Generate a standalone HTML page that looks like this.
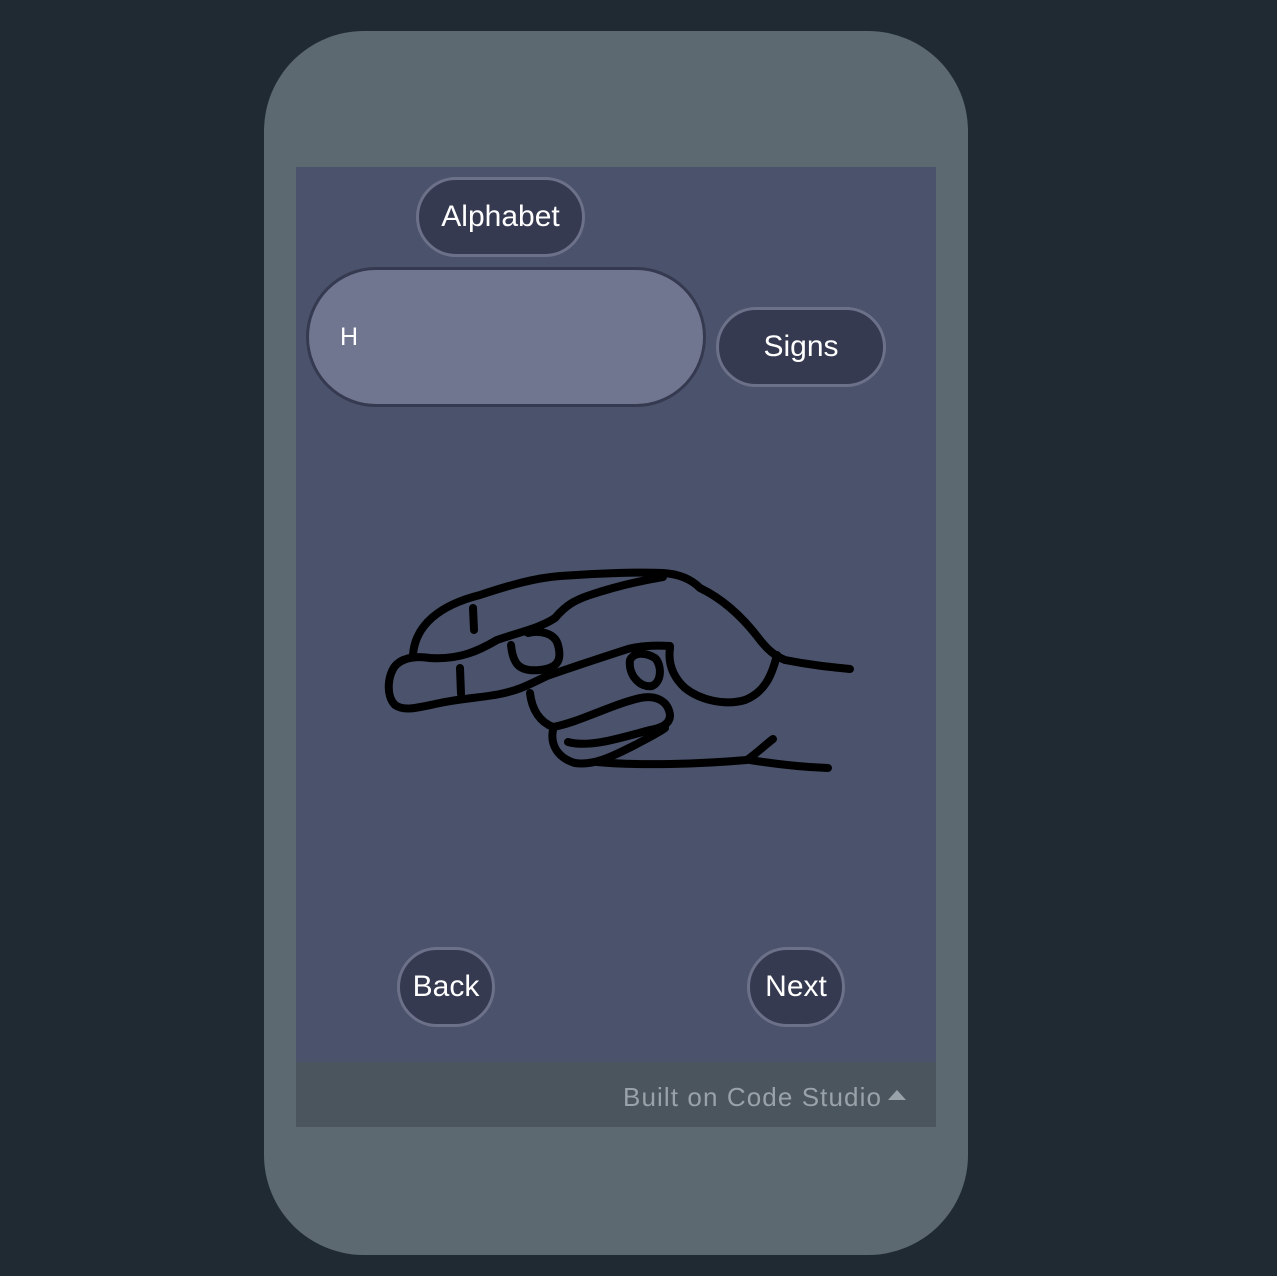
<!DOCTYPE html>
<html><head><meta charset="utf-8">
<style>
html,body{margin:0;padding:0;width:1277px;height:1276px;background:#202a33;overflow:hidden;font-family:"Liberation Sans",sans-serif;}
.phone{position:absolute;left:264px;top:31px;width:704px;height:1224px;background:#5c6970;border-radius:100px;}
.screen{position:absolute;left:296px;top:167px;width:640px;height:960px;background:#4a536b;}
.footer{position:absolute;left:296px;top:1062px;width:640px;height:65px;background:#4b555e;}
.ft{position:absolute;left:623px;top:1082px;font-size:26px;color:#9aa2a9;white-space:nowrap;letter-spacing:1.1px}
.btn{position:absolute;box-sizing:border-box;background:#363a51;border:3px solid #6c7189;border-radius:40px;color:#fff;font-size:30px;display:flex;align-items:center;justify-content:center;}
.box{position:absolute;left:306px;top:267px;width:400px;height:140px;box-sizing:border-box;background:#717690;border:3px solid #363a51;border-radius:70px;color:#fff;font-size:25px;}
</style></head><body>
<div class="phone"></div>
<div class="screen"></div>
<div class="footer"></div>
<div class="btn" style="left:416px;top:177px;width:169px;height:80px;">Alphabet</div>
<div class="box"><span style="position:absolute;left:31px;top:53px;">H</span></div>
<div class="btn" style="left:716px;top:307px;width:170px;height:80px;">Signs</div>
<div class="btn" style="left:397px;top:947px;width:98px;height:80px;">Back</div>
<div class="btn" style="left:747px;top:947px;width:98px;height:80px;">Next</div>
<svg style="position:absolute;left:0;top:0" width="1277" height="1276" fill="none" stroke="#000" stroke-width="8" stroke-linecap="round" stroke-linejoin="round">
<path d="M413,655 C415,625 440,605 480,595 C510,585 535,578 560,576 C600,573 640,572 663,573 C680,574 692,580 700,588 C725,600 745,620 760,640 C768,650 775,656 785,660 C810,665 830,667 850,669"/>
<path d="M777,655 C772,675 765,692 745,700 C725,706 700,700 685,688 C672,676 668,662 670,648"/>
<path d="M670,646 C655,645 640,646 628,649 C600,658 570,668 547,676 C530,684 520,690 500,694 C480,698 463,698 440,703 C420,707 405,712 395,705 C385,695 388,672 397,664 C405,657 418,656 430,658 C460,660 480,650 497,640 C520,632 540,628 555,618 C566,605 575,600 590,595 C620,585 645,580 663,577"/>
<path d="M511,645 C513,665 520,672 540,670 C558,668 562,660 558,645 C555,633 540,630 528,633"/>
<path d="M473,608 L474,630"/>
<path d="M460,668 L461,694"/>
<path d="M630,660 C628,675 640,688 652,686 C662,682 662,665 655,658 C645,652 634,652 630,660"/>
<path d="M530,693 C532,710 540,722 553,727 C580,722 610,705 640,698 C655,695 668,700 670,715 C670,725 660,728 650,730 C620,738 590,748 568,742"/>
<path d="M553,730 C550,745 558,758 575,763 C595,766 615,755 635,745 C650,737 660,732 665,728"/>
<path d="M597,762 C640,766 700,764 747,760 C758,752 765,745 773,739"/>
<path d="M750,760 C775,764 800,767 828,768"/>
</svg>
<div class="ft">Built on Code Studio</div>
<svg style="position:absolute;left:887px;top:1088px" width="20" height="13"><polygon points="1,12 10,2 19,12" fill="#9aa2a9"/></svg>
</body></html>
